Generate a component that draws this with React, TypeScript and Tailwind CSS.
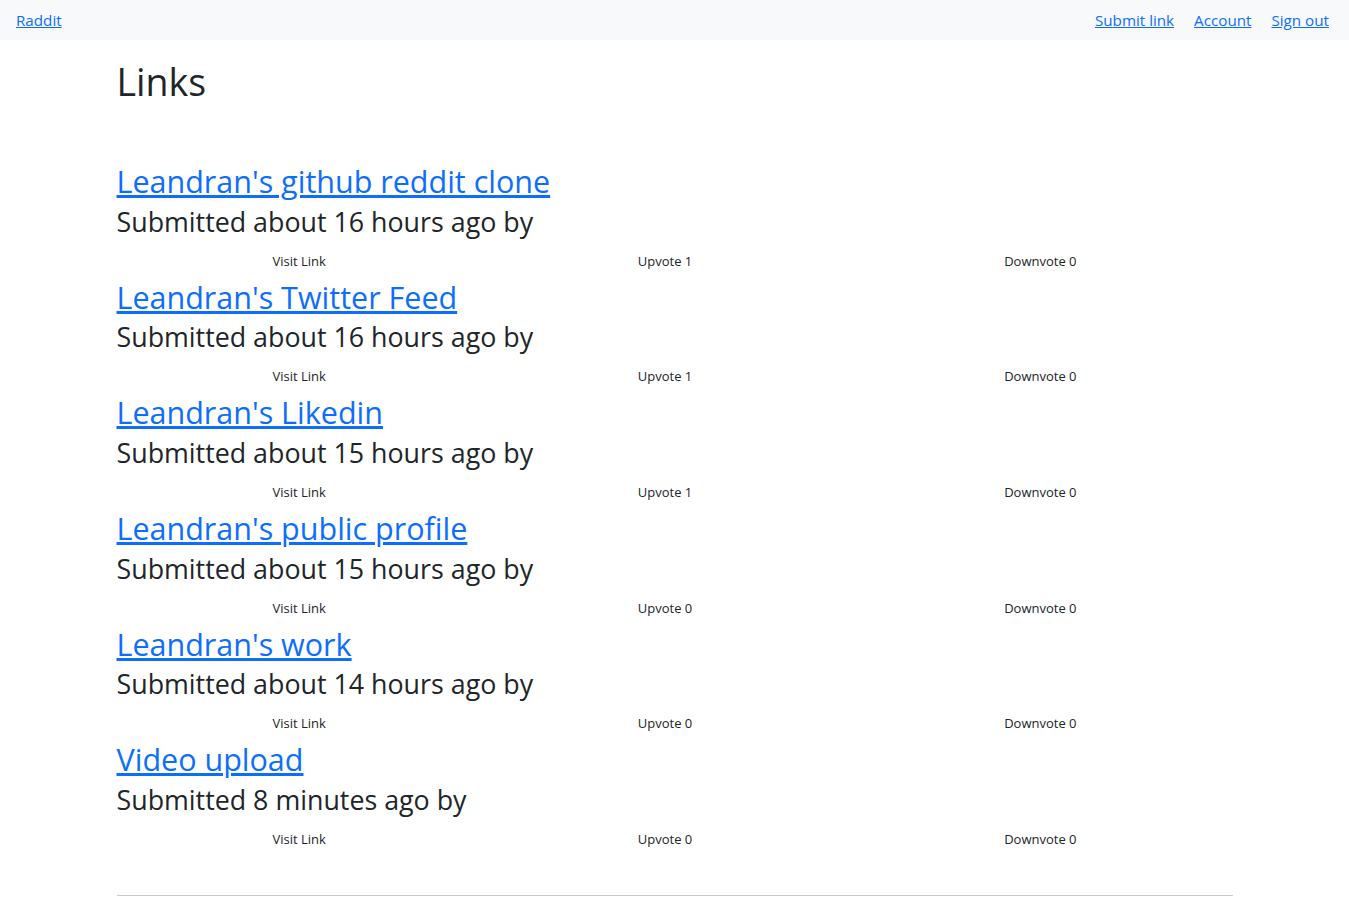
import React from "react";

const links = [
  { title: "Leandran's github reddit clone", time: "about 16 hours", up: 1, down: 0 },
  { title: "Leandran's Twitter Feed", time: "about 16 hours", up: 1, down: 0 },
  { title: "Leandran's Likedin", time: "about 15 hours", up: 1, down: 0 },
  { title: "Leandran's public profile", time: "about 15 hours", up: 0, down: 0 },
  { title: "Leandran's work", time: "about 14 hours", up: 0, down: 0 },
  { title: "Video upload", time: "8 minutes", up: 0, down: 0 },
];

export default function App() {
  return (
    <div className="min-h-screen bg-white text-[#212529] font-['Segoe_UI','Open_Sans',sans-serif]">
      <nav className="h-10 bg-[#f8f9fa] flex items-center justify-between pl-4 pr-5 text-[15.2px]">
        <a href="#" className="text-[#0d6efd] underline">Raddit</a>
        <div className="flex gap-5">
          <a href="#" className="text-[#0d6efd] underline">Submit link</a>
          <a href="#" className="text-[#0d6efd] underline">Account</a>
          <a href="#" className="text-[#0d6efd] underline">Sign out</a>
        </div>
      </nav>
      <main className="max-w-[1140px] mx-auto px-3">
        <h1 className="text-[37.5px] leading-[1.2] font-normal mt-[19px] mb-[58px]">Links</h1>
        {links.map((l) => (
          <div key={l.title} className="mb-[7.2px]">
            <h2 className="text-[30.5px] leading-[38px] font-normal">
              <a href="#" className="text-[#0d6efd] underline">{l.title}</a>
            </h2>
            <h3 className="text-[26.8px] leading-[34px] font-normal mt-[4.5px]">Submitted {l.time} ago by</h3>
            <div className="flex justify-around text-[13px] leading-5 mt-[12px]">
              <span>Visit Link</span>
              <span>Upvote {l.up}</span>
              <span>Downvote {l.down}</span>
            </div>
          </div>
        ))}
        <hr className="mt-[46px] border-t border-[#c8c9ca]" />
        <div className="h-10" />
      </main>
    </div>
  );
}
